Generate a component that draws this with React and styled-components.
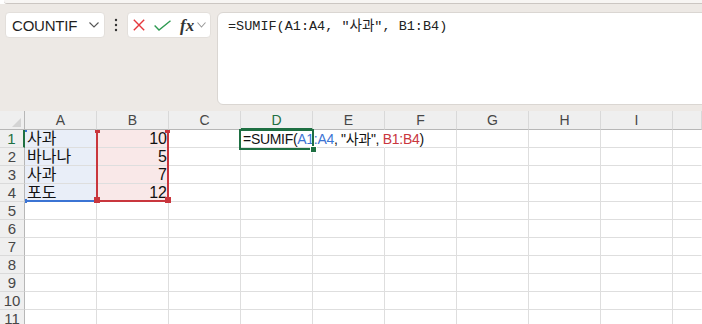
import React from "react";
import styled, { createGlobalStyle } from "styled-components";

const GREEN = "#1e6f42";
const BLUE = "#3b74d4";
const RED = "#c9363d";

const COLS = ["A", "B", "C", "D", "E", "F", "G", "H", "I"];
const ROW_COUNT = 11;

const values = {
  A1: "사과",
  A2: "바나나",
  A3: "사과",
  A4: "포도",
  B1: "10",
  B2: "5",
  B3: "7",
  B4: "12",
};

const GlobalStyle = createGlobalStyle`
  body {
    margin: 0;
    background: #fff;
    font-family: "Liberation Sans", "Noto Sans CJK KR", sans-serif;
    overflow: hidden;
  }
`;

const Page = styled.div`
  width: 702px;
  height: 324px;
  overflow: hidden;
`;

const TopStrip = styled.div`
  height: 3px;
  margin-left: 4px;
  background: #f7f5f3;
  border-bottom: 1px solid #cbc6c2;
  border-bottom-left-radius: 3px;
`;

const Toolbar = styled.div`
  display: flex;
  align-items: flex-start;
  height: 107px;
  box-sizing: border-box;
  padding: 8px 0 0 5px;
  background: #ede9e5;
  overflow: hidden;
`;

const NameBox = styled.div`
  width: 100px;
  height: 26px;
  box-sizing: border-box;
  display: flex;
  align-items: center;
  justify-content: space-between;
  padding: 0 5px 0 6px;
  background: #fff;
  border: 1px solid #e3dfdb;
  border-radius: 4px;
  font-size: 15px;
  letter-spacing: -0.2px;
  color: #1f1f1f;
`;

const Kebab = styled.div`
  width: 22px;
  height: 26px;
  display: flex;
  align-items: center;
  justify-content: center;
`;

const ButtonGroup = styled.div`
  width: 84px;
  height: 26px;
  box-sizing: border-box;
  display: flex;
  align-items: center;
  padding-left: 5px;
  background: #fff;
  border: 1px solid #e3dfdb;
  border-radius: 4px;
`;

const IconSlot = styled.span`
  display: flex;
  align-items: center;
  margin-left: ${(p) => p.$gap || 0}px;
`;

const Fx = styled.span`
  margin-left: 9px;
  font-family: "Liberation Serif", serif;
  font-style: italic;
  font-weight: bold;
  font-size: 17px;
  line-height: 1;
  color: #333;
`;

const FormulaBox = styled.div`
  flex: 1;
  height: 93px;
  box-sizing: border-box;
  margin-left: 6px;
  margin-right: -8px;
  padding: 6px 10px;
  background: #fff;
  border: 1px solid #dad6d2;
  border-radius: 6px;
  font-family: "Liberation Mono", "Noto Sans CJK KR", monospace;
  font-size: 13.5px;
  line-height: 16px;
  color: #222;
  white-space: pre;
`;

const Sheet = styled.div`
  display: grid;
`;

const Layer = styled.div`
  grid-area: 1 / 1;
  display: grid;
  grid-template-columns: 25px repeat(9, 72px) 1fr;
  grid-template-rows: 19px repeat(${ROW_COUNT}, 18px);
  pointer-events: ${(p) => (p.$overlay ? "none" : "auto")};
`;

const Corner = styled.div`
  box-sizing: border-box;
  background: #efefef;
  border-right: 1px solid #b7b7b7;
  border-bottom: 1px solid #b7b7b7;
  display: flex;
  align-items: flex-end;
  justify-content: flex-end;
  padding: 0 3px 2px 0;
`;

const ColHead = styled.div`
  box-sizing: border-box;
  background: #efefef;
  border-right: 1px solid #d9d9d9;
  border-bottom: ${(p) => (p.$active ? `2px solid ${GREEN}` : "1px solid #b7b7b7")};
  display: flex;
  align-items: center;
  justify-content: center;
  padding-bottom: ${(p) => (p.$active ? 0 : 1)}px;
  font-size: 14px;
  line-height: 1;
  color: ${(p) => (p.$active ? GREEN : "#474747")};
`;

const RowHead = styled.div`
  box-sizing: border-box;
  background: #efefef;
  border-right: ${(p) => (p.$active ? `2px solid ${GREEN}` : "1px solid #b7b7b7")};
  border-bottom: 1px solid #dadada;
  display: flex;
  align-items: center;
  justify-content: center;
  font-size: 15px;
  line-height: 1;
  color: ${(p) => (p.$active ? GREEN : "#474747")};
`;

const Cell = styled.div`
  box-sizing: border-box;
  min-width: 0;
  background: ${(p) => p.$fill || "transparent"};
  border-right: ${(p) => (p.$noRight ? "1px solid transparent" : "1px solid #dedede")};
  border-bottom: 1px solid #dedede;
  display: flex;
  align-items: center;
  justify-content: ${(p) => (p.$right ? "flex-end" : "flex-start")};
  padding: 0 1px 0 2px;
  font-size: 16px;
  line-height: 1;
  color: #111;
  white-space: pre;
  overflow: visible;
`;

const CellFormula = styled.span`
  font-size: 14px;
  letter-spacing: -0.3px;
  color: #111;
`;

const Ref = styled.span`
  color: ${(p) => p.$color};
`;

const Range = styled.div`
  position: relative;
  grid-column: ${(p) => p.$col};
  grid-row: ${(p) => p.$rows};
  margin: ${(p) => p.$margin || 0};
  box-sizing: border-box;
  border-style: solid;
  border-color: ${(p) => p.$color};
  border-width: ${(p) => p.$border || 0};
`;

const Handle = styled.span`
  position: absolute;
  width: ${(p) => p.$w}px;
  height: ${(p) => p.$h}px;
  background: ${(p) => p.$color};
  left: ${(p) => (p.$left !== undefined ? `${p.$left}px` : "auto")};
  right: ${(p) => (p.$rightPos !== undefined ? `${p.$rightPos}px` : "auto")};
  top: ${(p) => (p.$top !== undefined ? `${p.$top}px` : "auto")};
  bottom: ${(p) => (p.$bottom !== undefined ? `${p.$bottom}px` : "auto")};
  outline: ${(p) => (p.$ring ? "1px solid #fff" : "none")};
`;

const Underline = styled.span`
  position: absolute;
  left: 2px;
  right: 2px;
  bottom: 0;
  height: 2px;
  background: ${BLUE};
`;

const Chevron = ({ w = 10, color = "#555" }) => (
  <svg width={w} height="6" viewBox={`0 0 ${w} 6`}>
    <path d={`M0.5 0.5L${w / 2} 5L${w - 0.5} 0.5`} fill="none" stroke={color} strokeWidth="1.1" />
  </svg>
);

function FormulaInCell() {
  return (
    <CellFormula>
      {"=SUMIF("}
      <Ref $color={BLUE}>A1:A4</Ref>
      {', "사과", '}
      <Ref $color={RED}>B1:B4</Ref>
      {")"}
    </CellFormula>
  );
}

function cellContent(name) {
  if (name === "D1") return <FormulaInCell />;
  return values[name] || "";
}

export default function App() {
  const rows = [];
  for (let r = 1; r <= ROW_COUNT; r++) {
    rows.push(
      <RowHead key={`h${r}`} $active={r === 1}>
        {r}
      </RowHead>
    );
    COLS.forEach((c) => {
      const name = `${c}${r}`;
      const inRange = r <= 4;
      let fill;
      if (inRange && c === "A") fill = "#e9eef8";
      if (inRange && c === "B") fill = "#f9e8e8";
      rows.push(
        <Cell
          key={name}
          $fill={fill}
          $right={c === "B"}
          $noRight={name === "D1" || name === "E1"}
        >
          {cellContent(name)}
        </Cell>
      );
    });
    rows.push(<Cell key={`z${r}`} $noRight />);
  }

  return (
    <Page>
      <GlobalStyle />
      <TopStrip />
      <Toolbar>
        <NameBox>
          COUNTIF
          <Chevron />
        </NameBox>
        <Kebab>
          <svg width="4" height="14" viewBox="0 0 4 14">
            <circle cx="2" cy="2" r="1.2" fill="#333" />
            <circle cx="2" cy="7" r="1.2" fill="#333" />
            <circle cx="2" cy="12" r="1.2" fill="#333" />
          </svg>
        </Kebab>
        <ButtonGroup>
          <IconSlot>
            <svg width="12" height="12" viewBox="0 0 12 12">
              <path d="M0.8 0.8L11.2 11.2M11.2 0.8L0.8 11.2" stroke="#e5383d" strokeWidth="1.4" />
            </svg>
          </IconSlot>
          <IconSlot $gap={9}>
            <svg width="17" height="11" viewBox="0 0 17 11">
              <path d="M0.6 5.5L5 10L16.5 0.8" fill="none" stroke="#2e9a52" strokeWidth="1.4" />
            </svg>
          </IconSlot>
          <Fx>fx</Fx>
          <IconSlot $gap={3}>
            <Chevron w={9} color="#9a9a9a" />
          </IconSlot>
        </ButtonGroup>
        <FormulaBox>=SUMIF(A1:A4, "사과", B1:B4)</FormulaBox>
      </Toolbar>
      <Sheet>
        <Layer>
          <Corner>
            <svg width="9" height="9" viewBox="0 0 9 9">
              <path d="M9 0L9 9L0 9Z" fill="#d4d4d4" />
            </svg>
          </Corner>
          {COLS.map((c) => (
            <ColHead key={c} $active={c === "D"}>
              {c}
            </ColHead>
          ))}
          <ColHead />
          {rows}
        </Layer>
        <Layer $overlay>
          <Range $col={2} $rows="2 / 6" $color={BLUE}>
            <Underline />
            <Handle $color={BLUE} $w={2} $h={2} $left={0} $top={0} />
            <Handle $color={BLUE} $w={2} $h={4} $left={0} $bottom={-1} />
          </Range>
          <Range $col={3} $rows="2 / 6" $color={RED} $margin="0 0 0 -1px" $border="0 2px 2px 2px">
            <Handle $color={RED} $w={5} $h={3} $left={-3} $top={0} />
            <Handle $color={RED} $w={5} $h={3} $rightPos={-3} $top={0} />
            <Handle $color={RED} $w={6} $h={6} $left={-4} $bottom={-3} />
            <Handle $color={RED} $w={6} $h={6} $rightPos={-4} $bottom={-3} />
          </Range>
          <Range $col={5} $rows="2 / 3" $color={GREEN} $margin="-1px -1px -2px -2px" $border="2px">
            <Handle $color={GREEN} $w={5} $h={5} $rightPos={-4} $bottom={-4} $ring />
          </Range>
        </Layer>
      </Sheet>
    </Page>
  );
}
